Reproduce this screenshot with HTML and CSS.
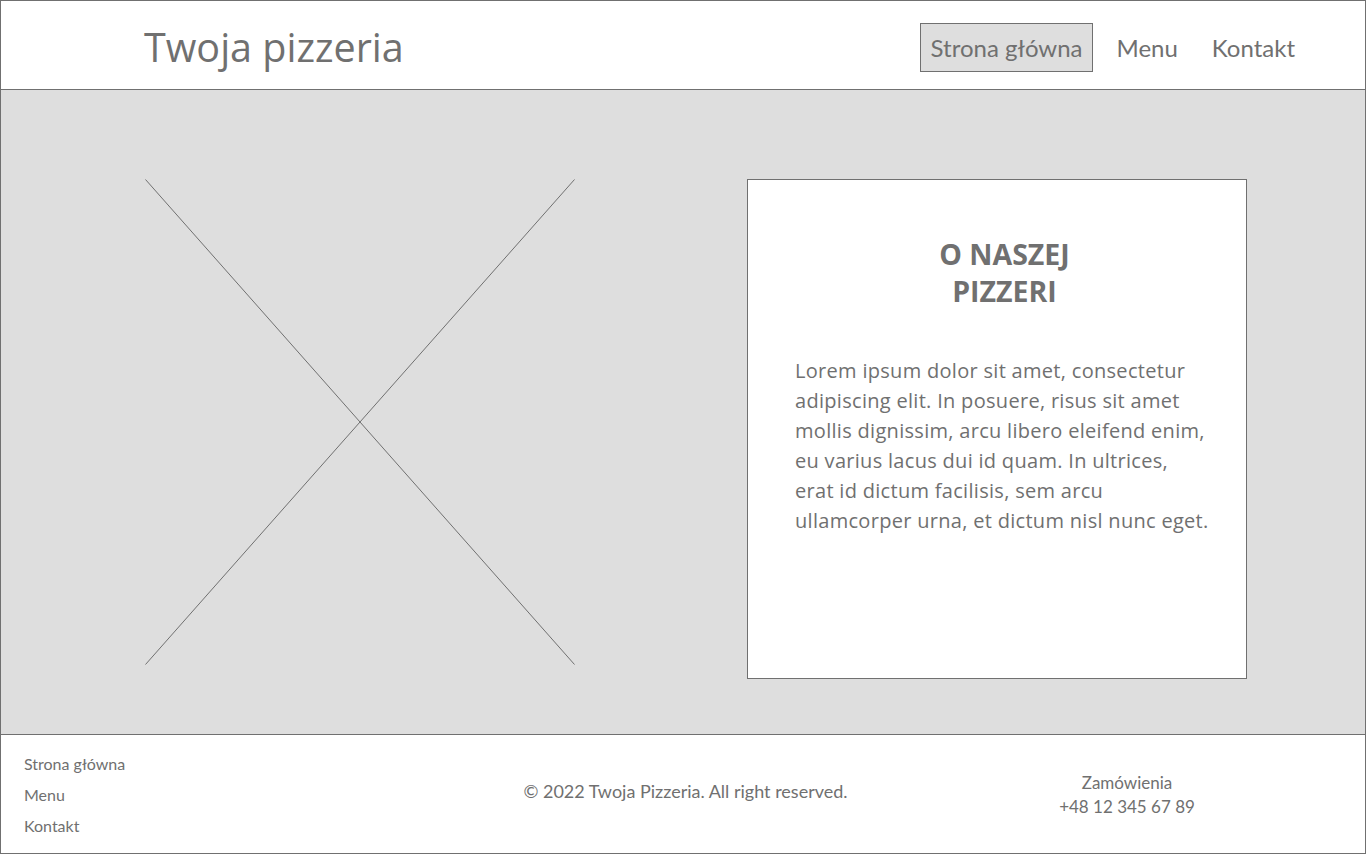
FILE: index.html
```html
<!DOCTYPE html>
<html lang="pl">
<head>
<meta charset="utf-8">
<title>Twoja pizzeria</title>
<link rel="stylesheet" href="styles.css">
</head>
<body>
<div class="page">
  <header class="header">
    <div class="brand">Twoja pizzeria</div>
    <nav class="nav">
      <a class="nav-item active" href="#">Strona główna</a>
      <a class="nav-item" href="#">Menu</a>
      <a class="nav-item" href="#">Kontakt</a>
    </nav>
  </header>
  <main class="main">
    <div class="placeholder">
      <svg class="x" viewBox="0 0 430 486" preserveAspectRatio="none" width="430" height="486">
        <line x1="0.5" y1="0.5" x2="429.5" y2="485.5" stroke="#707070" stroke-width="1"/>
        <line x1="429.5" y1="0.5" x2="0.5" y2="485.5" stroke="#707070" stroke-width="1"/>
      </svg>
    </div>
    <section class="card">
      <h1 class="card-title">O NASZEJ<br>PIZZERI</h1>
      <p class="card-text">Lorem ipsum dolor sit amet, consectetur<br>adipiscing elit. In posuere, risus sit amet<br>mollis dignissim, arcu libero eleifend enim,<br>eu varius lacus dui id quam. In ultrices,<br>erat id dictum facilisis, sem arcu<br>ullamcorper urna, et dictum nisl nunc eget.</p>
    </section>
  </main>
  <footer class="footer">
    <ul class="footer-links">
      <li><a href="#">Strona główna</a></li>
      <li><a href="#">Menu</a></li>
      <li><a href="#">Kontakt</a></li>
    </ul>
    <div class="copyright">© 2022 Twoja Pizzeria. All right reserved.</div>
    <div class="contact">Zamówienia<br>+48 12 345 67 89</div>
  </footer>
</div>
</body>
</html>
```
FILE: styles.css
```css
* { box-sizing: border-box; }
html, body { margin: 0; padding: 0; }
body {
  font-family: Lato, "Open Sans", sans-serif;
  color: #707070;
  background: #fff;
}
a { color: inherit; text-decoration: none; }
.page {
  width: 1366px;
  height: 854px;
  border: 1px solid #707070;
  display: flex;
  flex-direction: column;
}
.header {
  height: 89px;
  border-bottom: 1px solid #707070;
  display: flex;
  align-items: center;
  justify-content: space-between;
  padding: 4px 59px 0 143px;
  flex: none;
}
.brand {
  font-family: "Open Sans", Lato, sans-serif;
  font-size: 39.5px;
  line-height: 46px;
}
.nav {
  display: flex;
  gap: 12px;
  align-items: center;
}
.nav-item {
  font-size: 24px;
  line-height: 29px;
  padding: 9px 10px;
  border: 1px solid transparent;
}
.nav-item.active {
  background: #dedede;
  border-color: #707070;
}
.main {
  flex: none;
  height: 645px;
  background: #dedede;
  border-bottom: 1px solid #707070;
  display: flex;
  align-items: flex-start;
  padding: 89px 0 0 144px;
  gap: 172px;
}
.placeholder {
  width: 430px;
  height: 486px;
}
.x { display: block; }
.card {
  width: 500px;
  height: 500px;
  background: #fff;
  border: 1px solid #707070;
  padding: 56px 20px 0 47px;
  font-family: "Open Sans", Lato, sans-serif;
}
.card-title {
  margin: 0 0 46px;
  padding-right: 12px;
  text-align: center;
  font-size: 28.5px;
  line-height: 37px;
  font-weight: 700;
}
.card-text {
  margin: 0;
  font-size: 20px;
  line-height: 30px;
  letter-spacing: 0.3px;
  white-space: nowrap;
}
.footer {
  flex: 1;
  display: flex;
  align-items: center;
  padding: 0 0 0 23px;
}
.footer-links {
  list-style: none;
  margin: 0;
  padding: 0;
  width: 340px;
  font-size: 16px;
  line-height: 31px;
}
.copyright {
  width: 643px;
  text-align: center;
  font-size: 18px;
  margin-bottom: 7px;
}
.contact {
  width: 240px;
  text-align: center;
  font-size: 17px;
  line-height: 24px;
  padding-top: 1px;
}
```
